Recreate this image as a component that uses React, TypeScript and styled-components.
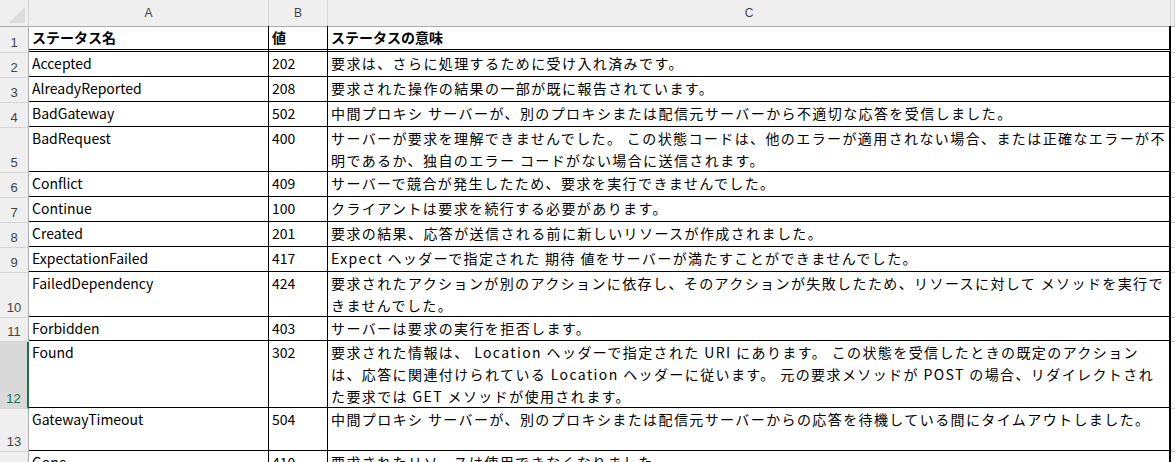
import React from "react";
import styled, { createGlobalStyle } from "styled-components";

const Global = createGlobalStyle`
  html, body { margin: 0; padding: 0; background: #fff; overflow: hidden; }
  body { font-family: "Noto Sans CJK JP", "Noto Sans", sans-serif; }
`;

const Sheet = styled.div`
  display: grid;
  grid-template-columns: 29px 240px 59px 843px 4px;
  width: 1175px;
  height: 462px;
  overflow: hidden;
  background: #fff;
`;

const Corner = styled.div`
  height: 26px;
  background: #efefef;
  border-bottom: 1px solid #ababab;
  border-right: 1px solid #d4d4d4;
  position: relative;
  &::after {
    content: "";
    position: absolute;
    right: 3px;
    bottom: 3px;
    border-left: 16px solid transparent;
    border-bottom: 16px solid #dcdcdc;
  }
`;

const ColHead = styled.div`
  height: 26px;
  background: #efefef;
  border-bottom: 1px solid #ababab;
  border-right: 1px solid #d4d4d4;
  display: flex;
  align-items: center;
  justify-content: center;
  font-family: "Liberation Sans", sans-serif;
  font-size: 12px;
  color: #444;
`;

const RowHead = styled.div<{ $h: number; $sel?: boolean }>`
  height: ${(p) => p.$h}px;
  box-sizing: border-box;
  background: ${(p) => (p.$sel ? "#d9d9d9" : "#efefef")};
  color: ${(p) => (p.$sel ? "#1e7145" : "#444")};
  border-bottom: 1px solid #d4d4d4;
  border-right: ${(p) => (p.$sel ? "2px solid #1e7145" : "1px solid #ababab")};
  display: flex;
  align-items: flex-end;
  justify-content: center;
  padding-bottom: 2px;
  font-family: "Liberation Sans", sans-serif;
  font-size: 13px;
`;

const Cell = styled.div<{ $h: number; $bold?: boolean; $double?: boolean; $last?: boolean }>`
  height: ${(p) => p.$h}px;
  box-sizing: border-box;
  border-bottom: ${(p) => (p.$double ? "3px double #000" : "1px solid #000")};
  border-right: ${(p) => (p.$last ? "2px solid #000" : "1px solid #000")};
  padding: 0 3px;
  margin-top: -1px;
  font-size: 14px;
  line-height: 22px;
  letter-spacing: ${(p) => (p.$last && !p.$bold ? "1.4px" : "0")};
  font-weight: ${(p) => (p.$bold ? 700 : 400)};
  color: #000;
  overflow: hidden;
  word-break: break-all;
`;

const Pad = styled.div<{ $h: number }>`
  height: ${(p) => p.$h}px;
  box-sizing: border-box;
  border-bottom: 1px solid #d4d4d4;
`;

const rows: [string, string, string, number][] = [
  ["ステータス名", "値", "ステータスの意味", 26],
  ["Accepted", "202", "要求は、さらに処理するために受け入れ済みです。", 25],
  ["AlreadyReported", "208", "要求された操作の結果の一部が既に報告されています。", 25],
  ["BadGateway", "502", "中間プロキシ サーバーが、別のプロキシまたは配信元サーバーから不適切な応答を受信しました。", 25],
  ["BadRequest", "400", "サーバーが要求を理解できませんでした。 この状態コードは、他のエラーが適用されない場合、または正確なエラーが不明であるか、独自のエラー コードがない場合に送信されます。", 45],
  ["Conflict", "409", "サーバーで競合が発生したため、要求を実行できませんでした。", 25],
  ["Continue", "100", "クライアントは要求を続行する必要があります。", 25],
  ["Created", "201", "要求の結果、応答が送信される前に新しいリソースが作成されました。", 25],
  ["ExpectationFailed", "417", "Expect ヘッダーで指定された 期待 値をサーバーが満たすことができませんでした。", 25],
  ["FailedDependency", "424", "要求されたアクションが別のアクションに依存し、そのアクションが失敗したため、リソースに対して メソッドを実行できませんでした。", 45],
  ["Forbidden", "403", "サーバーは要求の実行を拒否します。", 24],
  ["Found", "302", "要求された情報は、 Location ヘッダーで指定された URI にあります。 この状態を受信したときの既定のアクションは、応答に関連付けられている Location ヘッダーに従います。 元の要求メソッドが POST の場合、リダイレクトされた要求では GET メソッドが使用されます。", 67],
  ["GatewayTimeout", "504", "中間プロキシ サーバーが、別のプロキシまたは配信元サーバーからの応答を待機している間にタイムアウトしました。", 43],
  ["Gone", "410", "要求されたリソースは使用できなくなりました。", 25],
];

export default function App() {
  return (
    <>
      <Global />
      <Sheet>
        <Corner />
        <ColHead>A</ColHead>
        <ColHead>B</ColHead>
        <ColHead>C</ColHead>
        <ColHead />
        {rows.map(([a, b, c, h], i) => (
          <React.Fragment key={i}>
            <RowHead $h={h} $sel={i === 11}>{i + 1}</RowHead>
            <Cell $h={h} $bold={i === 0} $double={i === 0}>{a}</Cell>
            <Cell $h={h} $bold={i === 0} $double={i === 0}>{b}</Cell>
            <Cell $h={h} $bold={i === 0} $double={i === 0} $last>{c}</Cell>
            <Pad $h={h} />
          </React.Fragment>
        ))}
      </Sheet>
    </>
  );
}
